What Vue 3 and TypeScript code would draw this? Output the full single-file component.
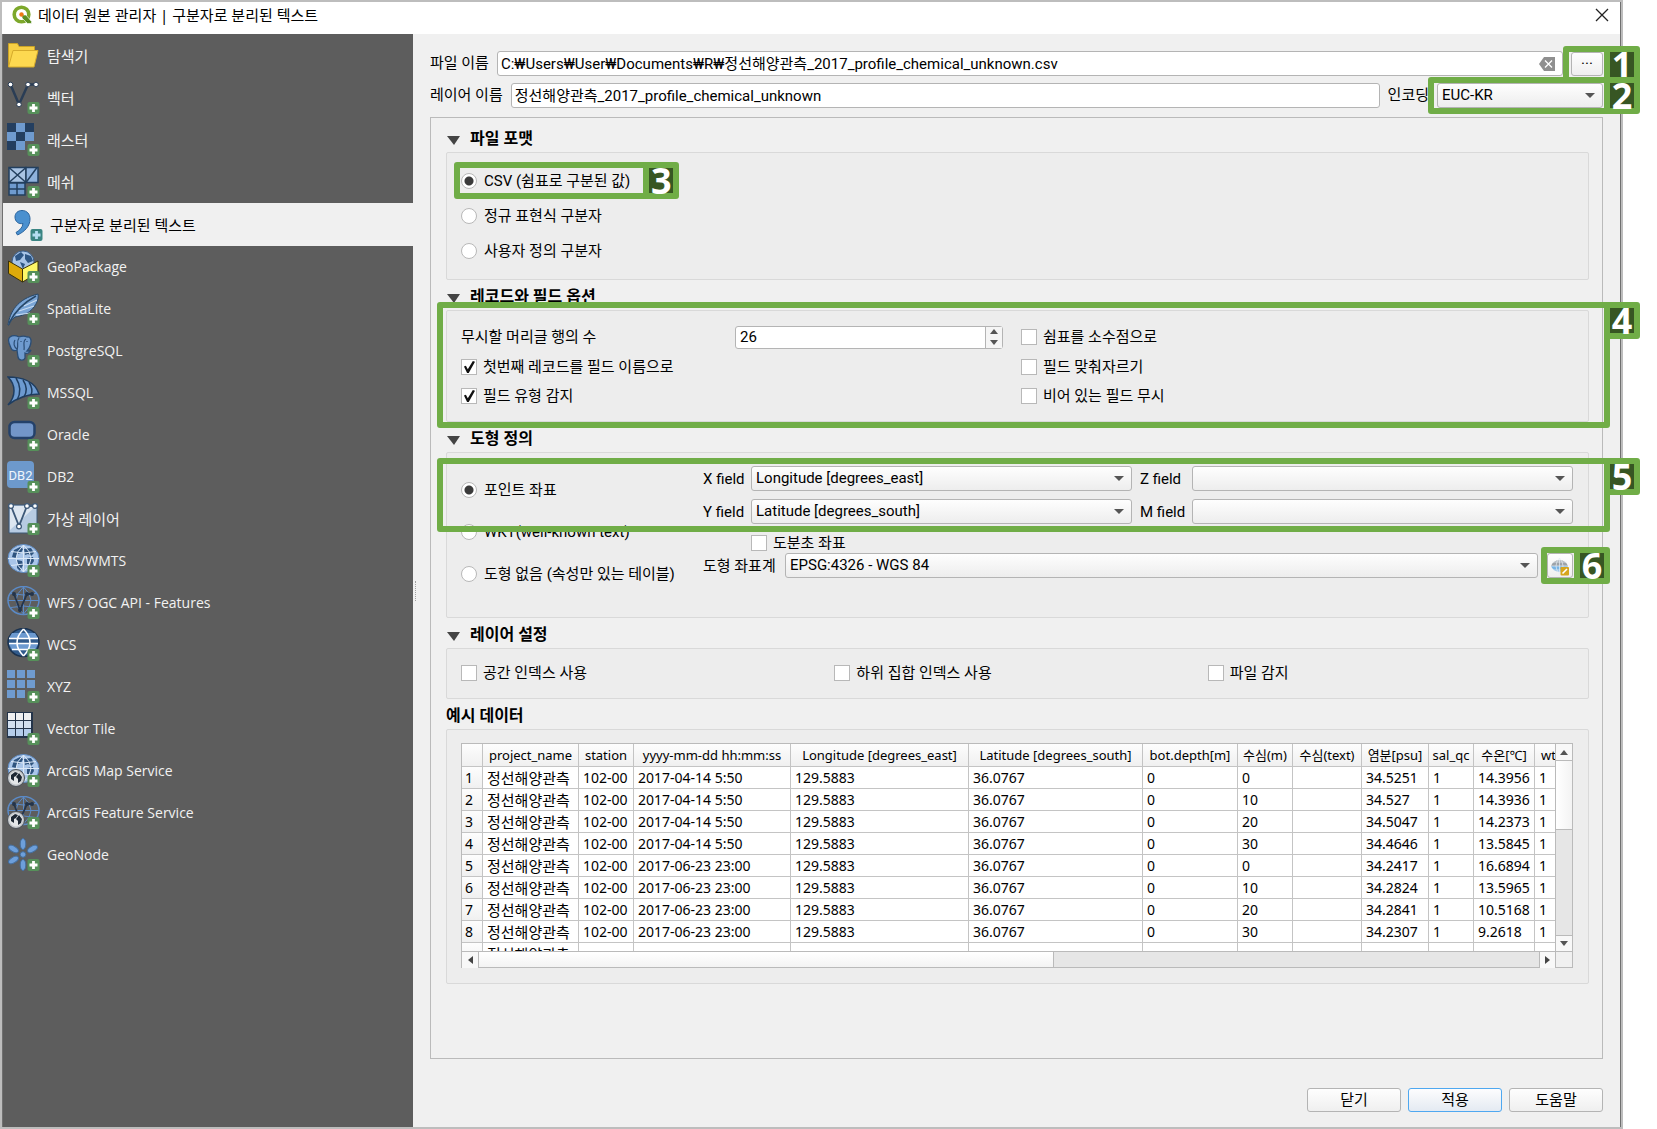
<script setup lang="ts">
import { ref } from 'vue'

interface Source {
  label: string
  icon: string
}

const tiles = (count: number, size: number, step: number, color: (i: number) => string): string =>
  Array.from({ length: count }, (_, i) =>
    `<rect x="${(i % 3) * step}" y="${Math.floor(i / 3) * step}" width="${size}" height="${size}" fill="${color(i)}"/>`,
  ).join('')

const dots = (points: number[][], r: number, paint: string): string =>
  `<g ${paint}>${points.map(([x, y]) => `<circle cx="${x}" cy="${y}" r="${r}"/>`).join('')}</g>`

const meridians = 'M16.5 1v27M1 14.5h31M4 7.5q12.5 3 25 0M4 21.5q12.5-3 25 0M16.5 1q-15 13.5 0 27M16.5 1q15 13.5 0 27'
const land = 'M7 6l6-3 3 2-2 4-4 1-1 4-4-1zM17 5l7-1 3 5-3 3-3-2-3 1zM10 16l5 1 1 4-3 6-3-3zM20 14l6-1 1 4-4 6-3-3z'
const smallGlobe = '<circle cx="9" cy="24" r="8.5" fill="#c4c8cc" stroke="#4a4f56"/><circle cx="9" cy="24" r="6.5" fill="#e4e6e8"/><path d="M4 21l4-3 3 1-2 3-2 1v4l-3-2zM12 19l3 4-1 4-3 2v-4l-2-2z" fill="#1d2733"/>'
const landGlobe = `<ellipse cx="16.5" cy="14.5" rx="15.5" ry="14" fill="#a9c5e8" stroke="#5d8bc4"/><path d="${land}" fill="#2f547f"/><path d="${meridians}" fill="none" stroke="#dbe8f7"/>`
const wireGlobe = `<ellipse cx="16.5" cy="14.5" rx="15.5" ry="14" fill="none" stroke="#5b8ac6" stroke-width="1.5"/><path d="${meridians}" fill="none" stroke="#5b8ac6"/><path d="M7 8l6 16 7-16h5" fill="none" stroke="#24344a" stroke-width="1.8"/>${dots([[7, 8], [20, 8], [25, 8], [13, 24]], 2, 'fill="#24344a"')}`

const icons: Record<string, string> = {
  folder: '<path d="M1.5 27.5V4.500h9l1.500 3h15.500v5" fill="#f6cf45" stroke="#c9a227"/><path d="M1.5 28L6 11.5h25L27 28z" fill="#fdd950" stroke="#d6ab2b"/>',
  vector: `<path d="M3.5 3.5L12 23.5 21 3.5h8" fill="none" stroke="#2a3d55" stroke-width="2.5"/>${dots([[3.5, 3.5], [21, 3.5], [29, 3.5], [12, 23.5]], 2.3, 'fill="#fff" stroke="#2a3d55"')}`,
  raster: tiles(8, 9, 9, (i) => (i % 2 === 0 && i !== 8 ? '#243f60' : '#6f9bcf')),
  mesh: '<g stroke="#233f5e" stroke-width="1.5"><path d="M2 2.5h17v15H2z" fill="#a9c4e4"/><path d="M19 2.5h12v15H19z" fill="#8fb2dc"/><path d="M2 18h16v12H2z" fill="#6f9bcf"/><path d="M2 2.5l17 15M19 2.5l-17 15M19 17.5l11-15M2 24h16M10 18v12" fill="none"/></g>',
  comma: '<path d="M5 9c0-4 3-6.500 7-6.500C17 2.500 20 6 20 11c0 7-5 12.500-12.500 16L6 24.500c4-2.500 6.500-5 7-9-4.500 1-8-2-8-6.500z" fill="#4a90cf" stroke="#2c659e"/>',
  geopackage: '<circle cx="16" cy="12" r="11" fill="#a8c4e6" stroke="#3a5f8c"/><path d="M8 6l6-4 3 3-4 5-4 1zM18 4l6 2 2 5-5 2-3-4zM13 12l5 2-2 5z" fill="#2e5684"/><path d="M1.5 11L15.5 19v13L1.5 23.5z" fill="#deaa0a" stroke="#3b3207"/><path d="M15.5 19L31 11v12L15.5 32z" fill="#fdf767" stroke="#3b3207"/>',
  feather: '<path d="M1 33c2-13 9-26 30-31 1 6-2 10-4 13-5 7-13 9-19 10-3 2-5 5-6 8z" fill="#7aa5d6" stroke="#274768"/><path d="M2 31C8 19 16 11 29 4" fill="none" stroke="#274768" stroke-width="1.5"/><path d="M9 23l14-2M12 19l15-5M17 14l13-6" stroke="#c8dbf1" stroke-width="1.2"/>',
  elephant: '<path d="M3 3c3-2 7-1 9 0 3-1 6-1 8 0 4-1 5 4 3 9-1 3-2 4-3 5 2 0 3 0 4-1-1 3-4 4-6 3v5c-1 3-6 3-7-1l-1-7c-2 1-5 1-6-2C2 10 0 5 3 3z" fill="#6f9bcf" stroke="#2a4d75" stroke-width="1.3"/><path d="M8 6c-2 3-1 7 2 9M12 4c-3 4 0 6-2 12M19 5c-4 2-1 7-2 11M14 7v1M20 7v1" fill="none" stroke="#2a4d75" stroke-width="1.2"/>',
  sail: '<path d="M1 1c13 0 27 4 31 17C21 18 10 22 1 29c8-9 8-20 0-28z" fill="#6c9ad0" stroke="#1f3d60" stroke-width="1.5"/><path d="M9 2c5 8 5 15 1 22M16 4c4 6 4 12 1 17M22 6c3 5 4 9 2 13" fill="none" stroke="#1f3d60" stroke-width="1.5"/>',
  oracle: '<rect x="2.5" y="4" width="25" height="16" rx="5" fill="#7396c9" stroke="#24416a" stroke-width="2.5"/>',
  db2: '<rect y="1" width="27" height="27" rx="4" fill="#6d99cc"/><text x="13.5" y="20" text-anchor="middle" fill="#eef5fc" font-family="Roboto, sans-serif" font-size="13">DB2</text>',
  virtual: `<path d="M2 3h28v28H2z" fill="#b7cbe2" stroke="#3d5877"/><path d="M3 4h26L3 28z" fill="#dde6f0"/><path d="M4 4l8 20L20 4h8" fill="none" stroke="#3d5877" stroke-width="1.8"/>${dots([[4, 4], [20, 4], [28, 4], [12, 24.5]], 2.4, 'fill="#fff" stroke="#3d5877" stroke-width="1.2"')}`,
  wms: landGlobe,
  wfs: wireGlobe,
  wcs: '<ellipse cx="16.5" cy="14.5" rx="15.5" ry="14" fill="#315b8c" stroke="#1b324e" stroke-width="1.5"/><path d="M5 5h23l3 5H2zM2 16h29l-3 6H5z" fill="#6c9ad0"/><path d="M2 10.500h29M2 15.500h29M5 21.500h23M16.500 1q-13 13.500 0 27M16.500 1q13 13.500 0 27" fill="none" stroke="#fff" stroke-width="1.5"/>',
  xyz: tiles(8, 8, 10, () => '#6f9bcf'),
  vtile: `<rect width="26" height="26" fill="#24344a"/><g transform="translate(1 1)">${tiles(9, 7, 8, (i) => ['#f1f1f1', '#d3e0f0', '#b4cdeb'][Math.floor(i / 3)])}</g>`,
  ams: landGlobe + smallGlobe,
  afs: wireGlobe + smallGlobe,
  geonode: '<g fill="#6d9fdb" stroke="#456f9f"><ellipse cx="16" cy="6" rx="2.8" ry="5.5"/><ellipse cx="16" cy="27" rx="2.8" ry="5.5"/><ellipse cx="6.5" cy="11" rx="2.8" ry="5.5" transform="rotate(-60 6.5 11)"/><ellipse cx="25.5" cy="11" rx="2.8" ry="5.5" transform="rotate(60 25.5 11)"/><ellipse cx="6.5" cy="22" rx="2.8" ry="5.5" transform="rotate(60 6.5 22)"/><circle cx="16" cy="16.5" r="2.8"/></g>',
}

const sources: Source[] = [
  { label: '탐색기', icon: 'folder' },
  { label: '벡터', icon: 'vector' },
  { label: '래스터', icon: 'raster' },
  { label: '메쉬', icon: 'mesh' },
  { label: '구분자로 분리된 텍스트', icon: 'comma' },
  { label: 'GeoPackage', icon: 'geopackage' },
  { label: 'SpatiaLite', icon: 'feather' },
  { label: 'PostgreSQL', icon: 'elephant' },
  { label: 'MSSQL', icon: 'sail' },
  { label: 'Oracle', icon: 'oracle' },
  { label: 'DB2', icon: 'db2' },
  { label: '가상 레이어', icon: 'virtual' },
  { label: 'WMS/WMTS', icon: 'wms' },
  { label: 'WFS / OGC API - Features', icon: 'wfs' },
  { label: 'WCS', icon: 'wcs' },
  { label: 'XYZ', icon: 'xyz' },
  { label: 'Vector Tile', icon: 'vtile' },
  { label: 'ArcGIS Map Service', icon: 'ams' },
  { label: 'ArcGIS Feature Service', icon: 'afs' },
  { label: 'GeoNode', icon: 'geonode' },
]
const active = ref('comma')
const isHangul = (text: string): boolean => /[가-힣]/.test(text)

const fileName = ref('C:₩Users₩User₩Documents₩R₩정선해양관측_2017_profile_chemical_unknown.csv')
const layerName = ref('정선해양관측_2017_profile_chemical_unknown')
const format = ref('csv')
const geometry = ref('point')
const skipLines = ref(26)
const headerFirst = ref(true)
const detectTypes = ref(true)

const formats = [
  { value: 'csv', label: 'CSV (쉼표로 구분된 값)' },
  { value: 'regexp', label: '정규 표현식 구분자' },
  { value: 'custom', label: '사용자 정의 구분자' },
]
const geometries = [
  { value: 'point', label: '포인트 좌표' },
  { value: 'wkt', label: 'WKT(well-known text)' },
  { value: 'none', label: '도형 없음 (속성만 있는 테이블)' },
]
const layerOptions = ['공간 인덱스 사용', '하위 집합 인덱스 사용', '파일 감지']

const columns = [
  { name: 'project_name', width: 96 },
  { name: 'station', width: 55 },
  { name: 'yyyy-mm-dd hh:mm:ss', width: 157 },
  { name: 'Longitude [degrees_east]', width: 178 },
  { name: 'Latitude [degrees_south]', width: 174 },
  { name: 'bot.depth[m]', width: 95 },
  { name: '수심(m)', width: 55 },
  { name: '수심(text)', width: 69 },
  { name: '염분[psu]', width: 67 },
  { name: 'sal_qc', width: 45 },
  { name: '수온[℃]', width: 61 },
  { name: 'wt', width: 28 },
]
const samples: [string, string, string, string][] = [
  ['2017-04-14 5:50', '0', '34.5251', '14.3956'],
  ['2017-04-14 5:50', '10', '34.527', '14.3936'],
  ['2017-04-14 5:50', '20', '34.5047', '14.2373'],
  ['2017-04-14 5:50', '30', '34.4646', '13.5845'],
  ['2017-06-23 23:00', '0', '34.2417', '16.6894'],
  ['2017-06-23 23:00', '10', '34.2824', '13.5965'],
  ['2017-06-23 23:00', '20', '34.2841', '10.5168'],
  ['2017-06-23 23:00', '30', '34.2307', '9.2618'],
]
const rows = samples.map(([time, depth, salinity, temp]) => [
  '정선해양관측', '102-00', time, '129.5883', '36.0767', '0', depth, '', salinity, '1', temp, '1',
])
</script>

<template>
  <div class="window">
    <header class="titlebar">
      <svg class="logo" viewBox="0 0 20 20" aria-hidden="true">
        <circle cx="9.5" cy="9.5" r="7.3" fill="none" stroke="#7da82b" stroke-width="3.6" />
        <path d="M10 10h4l5.5 6.5v2h-4L10 13z" fill="#5c8f22" stroke="#fff" stroke-width=".6" />
        <circle cx="9.5" cy="9.5" r="2.2" fill="#ee7913" />
      </svg>
      <h1>데이터 원본 관리자 | 구분자로 분리된 텍스트</h1>
      <button class="close" type="button" aria-label="닫기">
        <svg viewBox="0 0 14 14"><path d="M1 1l12 12M13 1L1 13" stroke="#222" stroke-width="1.3" /></svg>
      </button>
    </header>

    <div class="body">
      <nav class="sidebar">
        <button
          v-for="s in sources"
          :key="s.label"
          type="button"
          class="source"
          :class="{ selected: active === s.icon, hangul: isHangul(s.label) }"
          @click="active = s.icon"
        >
          <svg class="source-icon" viewBox="0 0 34 34" aria-hidden="true">
            <g v-html="icons[s.icon]" />
            <g v-if="s.icon !== 'folder'">
              <rect x="20.5" y="21" width="12" height="12" rx="2" :fill="s.icon === 'comma' ? '#3b8583' : '#56905a'" />
              <path d="M26.5 23v8M22.5 27h8" :stroke="s.icon === 'comma' ? '#b5def2' : '#fff'" stroke-width="2.8" />
            </g>
          </svg>
          <span>{{ s.label }}</span>
        </button>
      </nav>

      <i class="splitter" />

      <main class="main">
        <div class="row">
          <label for="file">파일 이름</label>
          <div class="field">
            <input id="file" v-model="fileName" type="text">
            <button class="clear" type="button" aria-label="지우기" @click="fileName = ''">
              <svg viewBox="0 0 16 14"><path d="M5 0h11v14H5L0 7z" fill="#8f8f8f" /><path d="M6 3.5l7 7M13 3.5l-7 7" stroke="#fff" stroke-width="1.3" /></svg>
            </button>
          </div>
          <div class="anchor browse">
            <button type="button" class="push" aria-label="찾아보기">···</button>
            <div class="mark mark-browse"><span class="num">1</span></div>
          </div>
        </div>

        <div class="row">
          <label for="layer">레이어 이름</label>
          <div class="field"><input id="layer" v-model="layerName" type="text"></div>
          <label for="encoding">인코딩</label>
          <div class="anchor encoding">
            <div class="combo"><select id="encoding"><option>EUC-KR</option></select></div>
            <div class="mark mark-encoding"><span class="num">2</span></div>
          </div>
        </div>

        <div class="frame">
          <h2><i class="fold" />파일 포맷</h2>
          <section class="group formats">
            <div v-for="f in formats" :key="f.value" class="anchor format">
              <label class="check"><input v-model="format" type="radio" name="format" :value="f.value">{{ f.label }}</label>
              <div v-if="f.value === 'csv'" class="mark mark-format"><span class="num">3</span></div>
            </div>
          </section>

          <h2><i class="fold" />레코드와 필드 옵션</h2>
          <section class="group records">
            <label for="skip">무시할 머리글 행의 수</label>
            <div class="spin">
              <input id="skip" v-model.number="skipLines" type="number">
              <div class="steps">
                <button type="button" aria-label="증가" @click="skipLines++"><i class="tri up" /></button>
                <button type="button" aria-label="감소" @click="skipLines--"><i class="tri down" /></button>
              </div>
            </div>
            <label class="check"><input type="checkbox">쉼표를 소수점으로</label>
            <label class="check wide"><input v-model="headerFirst" type="checkbox">첫번째 레코드를 필드 이름으로</label>
            <label class="check"><input type="checkbox">필드 맞춰자르기</label>
            <label class="check wide"><input v-model="detectTypes" type="checkbox">필드 유형 감지</label>
            <label class="check"><input type="checkbox">비어 있는 필드 무시</label>
            <div class="mark mark-records"><span class="num">4</span></div>
          </section>

          <h2><i class="fold" />도형 정의</h2>
          <section class="group geometry">
            <div class="geometry-types">
              <label v-for="g in geometries" :key="g.value" class="check">
                <input v-model="geometry" type="radio" name="geometry" :value="g.value">{{ g.label }}
              </label>
            </div>
            <div class="coords">
              <div class="axes">
                <label for="xf">X field</label>
                <div class="combo"><select id="xf"><option>Longitude [degrees_east]</option></select></div>
                <label class="second" for="zf">Z field</label>
                <div class="combo"><select id="zf"><option /></select></div>
                <label for="yf">Y field</label>
                <div class="combo"><select id="yf"><option>Latitude [degrees_south]</option></select></div>
                <label class="second" for="mf">M field</label>
                <div class="combo"><select id="mf"><option /></select></div>
              </div>
              <label class="check dms"><input type="checkbox">도분초 좌표</label>
              <div class="crs">
                <label for="crs">도형 좌표계</label>
                <div class="combo"><select id="crs"><option>EPSG:4326 - WGS 84</option></select></div>
                <div class="anchor crs-pick">
                  <button type="button" class="push" aria-label="좌표계 선택">
                    <svg viewBox="0 0 20 20">
                      <path d="M1 10a9 8.500 0 0 1 17 0z" fill="#9da3a9" />
                      <path d="M1 10a9 8.500 0 0 0 17 0z" fill="#79b5e6" />
                      <path d="M1 10h17M2 6h15M9.5 2v16M9.5 2q-7 8 0 16M9.5 2q7 8 0 16M3 14h13" fill="none" stroke="#e8eef4" stroke-width=".7" />
                      <rect x="10.5" y="11" width="8.5" height="8.5" rx="1" fill="#d6a51c" />
                      <path d="M12.5 17.5l4.5-4.5" stroke="#fff" stroke-width="1.6" />
                    </svg>
                  </button>
                  <div class="mark mark-crs"><span class="num">6</span></div>
                </div>
              </div>
            </div>
            <div class="mark mark-axes"><span class="num">5</span></div>
          </section>

          <h2><i class="fold" />레이어 설정</h2>
          <section class="group layer-options">
            <label v-for="o in layerOptions" :key="o" class="check"><input type="checkbox">{{ o }}</label>
          </section>

          <h2>예시 데이터</h2>
          <section class="group preview">
            <div class="grid-view">
              <div class="clip">
                <table>
                  <colgroup>
                    <col style="width: 21px">
                    <col v-for="c in columns" :key="c.name" :style="{ width: c.width + 'px' }">
                  </colgroup>
                  <thead>
                    <tr><th /><th v-for="c in columns" :key="c.name" scope="col">{{ c.name }}</th></tr>
                  </thead>
                  <tbody>
                    <tr v-for="(r, i) in rows" :key="i">
                      <th scope="row">{{ i + 1 }}</th>
                      <td v-for="(v, j) in r" :key="j" :class="{ hangul: isHangul(v) }">{{ v }}</td>
                    </tr>
                    <tr><th scope="row" /><td class="hangul">정선해양관측</td><td v-for="n in 11" :key="n" /></tr>
                  </tbody>
                </table>
              </div>
              <div class="bar vertical">
                <button type="button" aria-label="위로"><i class="tri up" /></button>
                <div class="thumb" />
                <div class="track" />
                <button type="button" aria-label="아래로"><i class="tri down" /></button>
              </div>
              <div class="bar horizontal">
                <button type="button" aria-label="왼쪽"><i class="tri left" /></button>
                <div class="thumb" />
                <div class="track" />
                <button type="button" aria-label="오른쪽"><i class="tri right" /></button>
              </div>
              <div class="corner" />
            </div>
          </section>
        </div>

        <footer class="actions">
          <button type="button" class="push">닫기</button>
          <button type="button" class="push primary">적용</button>
          <button type="button" class="push">도움말</button>
        </footer>
      </main>
    </div>
  </div>
</template>

<style>
body {
  margin: 0;
  background: #fff;
}
</style>

<style scoped>
* {
  box-sizing: border-box;
}

.window {
  display: flex;
  flex-direction: column;
  min-height: 100vh;
  margin-right: 34px;
  border: 2px solid #bdbdbd;
  background: #f0f0f0;
  color: #000;
  font: 15px/20px Roboto, "Noto Sans CJK KR", sans-serif;
}

button,
input,
select {
  margin: 0;
  padding: 0;
  font: inherit;
  color: inherit;
}

button {
  border: 0;
  background: none;
}

.titlebar {
  display: flex;
  align-items: center;
  height: 32px;
  padding: 0 11px 6px 10px;
  background: #fff;
  border-right: 1px solid #707070;
}

.logo {
  width: 20px;
  height: 20px;
}

.titlebar h1 {
  flex: 1;
  margin: 0 0 0 6px;
  font: 15px/20px "Noto Sans", "Noto Sans CJK KR", sans-serif;
}

.close,
.close svg {
  display: block;
  width: 14px;
  height: 14px;
}

.body {
  position: relative;
  display: flex;
  flex: 1;
  border: solid #707070;
  border-width: 0 1px;
}

.sidebar {
  flex: none;
  display: flex;
  flex-direction: column;
  width: 410px;
  padding-top: 1px;
  background: #5d5d5d;
}

.source {
  display: flex;
  align-items: center;
  gap: 6px;
  height: 42px;
  padding-left: 4px;
  color: #f2f2f2;
  text-align: left;
  font: 14px/20px "Open Sans", "Noto Sans CJK KR", sans-serif;
}

.source.selected {
  height: 43px;
  padding-left: 7px;
  background: #f0f0f0;
  color: #000;
}

.hangul {
  font-size: 15px;
}

.source-icon {
  width: 34px;
  height: 34px;
}

.splitter {
  position: absolute;
  top: 50%;
  left: 412px;
  height: 20px;
  border-left: 1px dotted #a0a0a0;
}

.main {
  flex: 1;
  min-width: 0;
  display: flex;
  flex-direction: column;
  padding: 17px 17px 15px;
}

.row {
  display: flex;
  align-items: center;
  gap: 8px;
  height: 25px;
  margin-bottom: 7px;
}

.row + .row {
  margin-bottom: 9px;
}

.row > label {
  padding-bottom: 2px;
}

.field {
  position: relative;
  flex: 1;
  height: 25px;
}

.field input {
  width: 100%;
  height: 100%;
  padding: 0 30px 2px 3px;
  border: 1px solid #b4b4b4;
  border-radius: 3px;
  background: #fff;
}

.clear {
  position: absolute;
  top: 6px;
  right: 8px;
  width: 16px;
  height: 14px;
}

.clear svg {
  display: block;
}

.anchor {
  position: relative;
}

.browse {
  width: 32px;
  height: 23px;
}

.browse .push {
  width: 100%;
}

.encoding {
  width: 166px;
}

.push {
  height: 24px;
  border: 1px solid #b4b4b4;
  border-radius: 3px;
  background: linear-gradient(#fefefe, #efefef);
  line-height: 20px;
}

.push.primary {
  border-color: #4fa8f0;
  background: linear-gradient(#fdfdfe, #e4eaf2);
}

.combo {
  position: relative;
}

.combo select {
  display: block;
  width: 100%;
  height: 25px;
  padding: 0 24px 1px 4px;
  appearance: none;
  border: 1px solid #b4b4b4;
  border-radius: 3px;
  background: linear-gradient(#fefefe, #ededed);
}

.combo::after {
  content: "";
  position: absolute;
  top: 10px;
  right: 8px;
  border: solid transparent;
  border-width: 5px 5px 0;
  border-top-color: #555;
}

.frame {
  flex: 1;
  padding: 4px 13px 0 15px;
  border: 1px solid #bababa;
}

h2 {
  display: flex;
  align-items: center;
  height: 30px;
  margin: 0;
  padding-top: 4px;
  font-size: 16px;
  font-weight: 700;
}

.fold {
  margin: 3px 10px 0 1px;
  border: solid transparent;
  border-width: 9px 6px 0 7px;
  border-top-color: #444;
}

.group {
  position: relative;
  border: 1px solid #d9d9d9;
  border-radius: 2px;
  background: #ededed;
}

.check {
  display: flex;
  align-items: center;
  gap: 6px;
  white-space: nowrap;
}

.check input {
  flex: none;
  display: grid;
  place-items: center;
  width: 16px;
  height: 16px;
  appearance: none;
  border: 1px solid #b8b8b8;
  background: #fff;
}

.check input[type="radio"] {
  border-radius: 50%;
  margin-right: 1px;
}

.check input[type="radio"]:checked {
  background: radial-gradient(circle, #3a3a3a 4px, #fff 5px);
}

.check input[type="checkbox"]:checked::after {
  content: "";
  width: 12px;
  height: 12px;
  background: #111;
  clip-path: polygon(8% 45%, 24% 40%, 40% 68%, 82% 0, 100% 6%, 48% 100%, 34% 100%);
}

.formats {
  height: 128px;
  padding: 10px 14px;
}

.format {
  display: flex;
  width: fit-content;
  height: 35px;
}

.records {
  display: grid;
  grid-template-columns: 274px 268px 1fr;
  grid-template-rows: 30px 30px 28px;
  align-items: center;
  height: 112px;
  padding: 11px 14px;
}

.records .wide {
  grid-column: span 2;
}

.records .check:not(.wide) {
  padding-left: 18px;
}

.spin {
  display: flex;
  height: 23px;
  border: 1px solid #b4b4b4;
  border-radius: 3px;
  background: #fff;
}

.spin input {
  flex: 1;
  min-width: 0;
  padding-left: 4px;
  border: 0;
  background: none;
  appearance: textfield;
}

.spin input::-webkit-inner-spin-button {
  display: none;
}

.steps {
  display: flex;
  flex-direction: column;
  width: 17px;
  border-left: 1px solid #b4b4b4;
  background: #f5f5f5;
}

.steps button {
  flex: 1;
  display: grid;
  place-items: center;
}

.tri {
  display: block;
  border: 4px solid transparent;
}

.tri.up {
  border-top: 0;
  border-bottom: 5px solid #555;
}

.tri.down {
  border-bottom: 0;
  border-top: 5px solid #555;
}

.tri.left {
  border-left: 0;
  border-right: 5px solid #444;
}

.tri.right {
  border-right: 0;
  border-left: 5px solid #444;
}

.geometry {
  display: flex;
  height: 166px;
  padding: 13px 15px 0 14px;
}

.geometry-types {
  flex: none;
  width: 242px;
  padding-top: 3px;
}

.geometry-types .check {
  height: 42px;
}

.coords {
  flex: 1;
}

.axes {
  display: grid;
  grid-template-columns: 48px 1fr 60px 1fr;
  gap: 8px 0;
  align-items: center;
}

.second {
  padding-left: 8px;
}

.dms {
  height: 21px;
  margin: 8px 0 0 48px;
}

.crs {
  display: flex;
  align-items: center;
}

.crs > label {
  width: 82px;
}

.crs .combo {
  flex: 1;
}

.crs-pick {
  width: 26px;
  margin-left: 9px;
}

.crs-pick .push {
  display: grid;
  place-items: center;
  width: 26px;
  height: 25px;
}

.crs-pick svg {
  width: 20px;
  height: 20px;
}

.layer-options {
  display: grid;
  grid-template-columns: repeat(3, 1fr);
  gap: 8px;
  height: 51px;
  padding: 0 15px 2px 14px;
}

.preview {
  padding: 13px 15px 15px 14px;
}

.grid-view {
  display: grid;
  grid-template-columns: minmax(0, 1fr) 17px;
  grid-template-rows: 207px 16px;
  border: 1px solid #bababa;
  background: #fff;
  font: 14px/20px "Noto Sans", "Noto Sans CJK KR", sans-serif;
}

.clip {
  overflow: hidden;
}

table {
  width: 0;
  table-layout: fixed;
  border-collapse: separate;
  border-spacing: 0;
}

th,
td {
  height: 22px;
  padding: 0 0 0 4px;
  overflow: hidden;
  border: solid #c4c4c4;
  border-width: 0 1px 1px 0;
  font-weight: 400;
  line-height: 20px;
  text-align: left;
  white-space: nowrap;
}

th {
  padding: 0 3px;
  background: linear-gradient(#fdfdfd, #f0f0f0);
}

thead th {
  height: 23px;
  text-align: center;
  font-size: 13px;
}

.bar {
  display: flex;
  background: #e6e6e6;
}

.bar button {
  flex: none;
  display: grid;
  place-items: center;
  width: 16px;
  height: 16px;
  background: #f8f8f8;
}

.bar .track {
  flex: 11;
}

.vertical {
  flex-direction: column;
  border-left: 1px solid #bababa;
}

.vertical .thumb {
  height: 70px;
  border: solid #bababa;
  border-width: 1px 0;
  background: linear-gradient(90deg, #fff, #f3f3f3);
}

.vertical button:last-child {
  border-top: 1px solid #bababa;
}

.horizontal {
  border-top: 1px solid #bababa;
}

.horizontal .thumb {
  flex: 13;
  border: solid #bababa;
  border-width: 0 1px;
  background: linear-gradient(#fff, #f3f3f3);
}

.horizontal button:last-child {
  border-left: 1px solid #bababa;
}

.corner {
  border: solid #bababa;
  border-width: 1px 0 0 1px;
  background: #f0f0f0;
}

.actions {
  display: flex;
  justify-content: flex-end;
  gap: 7px;
  margin-top: 29px;
}

.actions .push {
  width: 94px;
}

.mark {
  position: absolute;
  z-index: 1;
  border: 6px solid #70ad47;
  border-radius: 3px;
  pointer-events: none;
}

.num {
  position: absolute;
  top: -6px;
  left: 100%;
  width: 36px;
  height: 37px;
  border: 6px solid #70ad47;
  border-radius: 3px;
  background: #375623;
  color: #fff;
  font: 700 36px/25px "Open Sans", sans-serif;
  text-align: center;
}

.mark-browse {
  inset: -6px -7px -8px -8px;
}

.mark-encoding {
  z-index: 2;
  inset: -6px -7px -6px -9px;
}

.mark-format {
  inset: -1px -19px -1px -7px;
}

.mark-records {
  inset: -9px -22px -7px -10px;
}

.mark-axes {
  top: 5px;
  left: -10px;
  right: -22px;
  height: 74px;
}

.mark-crs {
  inset: -6px -7px -6px -6px;
}
</style>
